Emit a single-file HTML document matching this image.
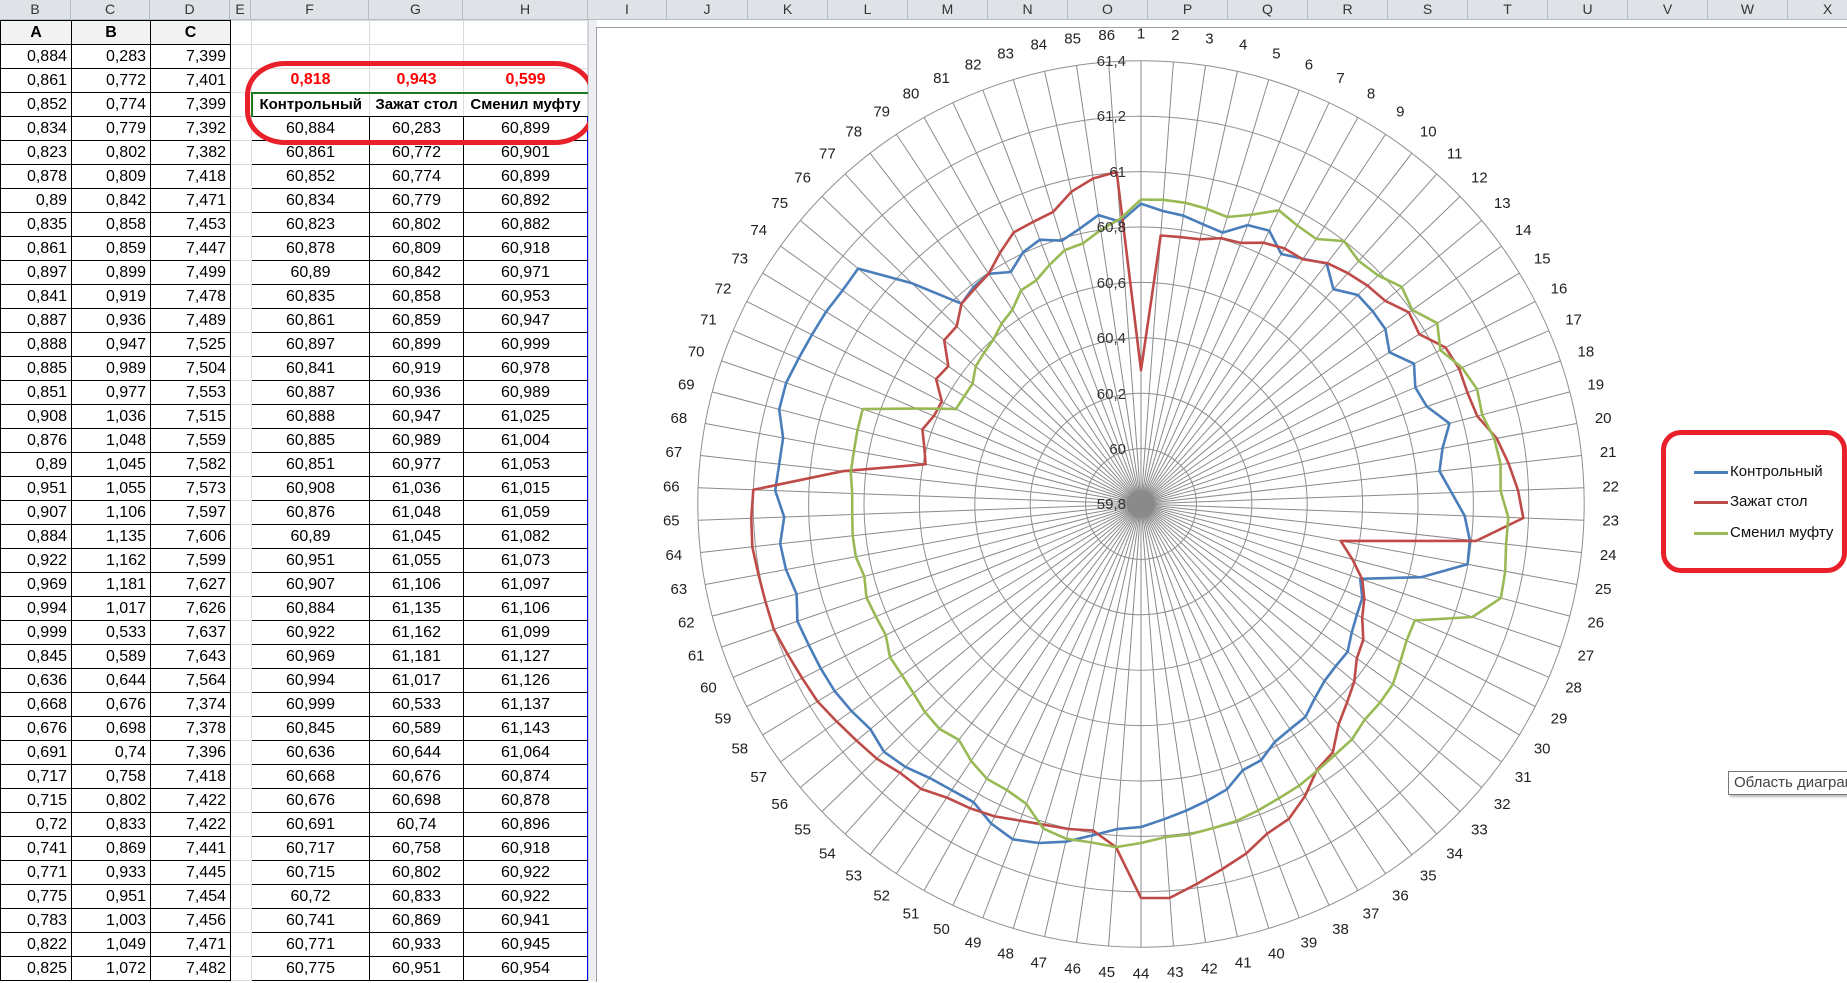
<!DOCTYPE html>
<html><head><meta charset="utf-8">
<style>
html,body{margin:0;padding:0;width:1847px;height:981px;overflow:hidden;background:#fff;font-family:"Liberation Sans","Noto Sans CJK SC",sans-serif;}
#hdr{position:absolute;left:0;top:0;width:1847px;height:19px;background:#dfe3e8;border-bottom:1px solid #b6bcc6;}
.ch{position:absolute;top:0;height:19px;line-height:19px;text-align:center;font-size:14px;color:#333;border-right:1px solid #b6bcc6;box-sizing:border-box;}
table{position:absolute;left:0;top:20px;border-collapse:collapse;table-layout:fixed;font-size:16px;}
td{height:24px;padding:0 4px;box-sizing:border-box;white-space:nowrap;overflow:hidden;border:1px solid #dadcdd;}
td.b{border:1px solid #000;text-align:right;}
td.f{border:1px solid #000;text-align:center;}
tr.h td.b{font-weight:bold;text-align:center;background:#f2f2f2;}
td.r{color:#f00;font-weight:bold;text-align:center;}
td.t{font-weight:bold;text-align:center;font-size:15px;padding:0 1px;border-top:2px solid #1e7a1e;border-bottom:1px solid #000;}
#split{position:absolute;left:588px;top:20px;width:8px;height:961px;background:#eceef1;border-left:1px solid #c9ccd1;}
#chart{position:absolute;left:596px;top:27px;width:1251px;height:954px;background:#fff;border-left:1px solid #a0a0a0;border-top:1px solid #a0a0a0;overflow:visible;}
.lb{position:absolute;left:1141px;top:504px;font-size:15px;color:#222;white-space:nowrap;transform:translate(-50%,-50%) rotate(calc(var(--i)*4.18605deg)) translateY(-470px) rotate(calc(var(--i)*-4.18605deg));}
#redov{position:absolute;left:245px;top:61px;width:340px;height:74px;border:5px solid #e8202a;border-radius:40px/34px;}
#leg{position:absolute;left:1661px;top:430px;width:176px;height:133px;border:5px solid #e8202a;border-radius:20px;}
.li{position:absolute;left:1694px;font-size:15px;color:#111;white-space:nowrap;}
.li span{display:inline-block;width:34px;height:3px;vertical-align:middle;margin-right:2px;}
#tip{position:absolute;left:1728px;top:771px;width:140px;height:22px;border:1px solid #777;background:#fff;font-size:15px;color:#444;line-height:22px;padding-left:5px;box-shadow:2px 2px 2px #bbb;white-space:nowrap;overflow:hidden;}
</style></head><body>
<div id="hdr">
<div class="ch" style="left:0;width:71px">B</div>
<div class="ch" style="left:71px;width:79px">C</div>
<div class="ch" style="left:150px;width:80px">D</div>
<div class="ch" style="left:230px;width:21px">E</div>
<div class="ch" style="left:251px;width:118px">F</div>
<div class="ch" style="left:369px;width:94px">G</div>
<div class="ch" style="left:463px;width:125px">H</div>
<div class="ch" style="left:588px;width:79px">I</div>
<div class="ch" style="left:667px;width:81px">J</div>
<div class="ch" style="left:748px;width:80px">K</div>
<div class="ch" style="left:828px;width:80px">L</div>
<div class="ch" style="left:908px;width:80px">M</div>
<div class="ch" style="left:988px;width:80px">N</div>
<div class="ch" style="left:1068px;width:80px">O</div>
<div class="ch" style="left:1148px;width:80px">P</div>
<div class="ch" style="left:1228px;width:80px">Q</div>
<div class="ch" style="left:1308px;width:80px">R</div>
<div class="ch" style="left:1388px;width:80px">S</div>
<div class="ch" style="left:1468px;width:80px">T</div>
<div class="ch" style="left:1548px;width:80px">U</div>
<div class="ch" style="left:1628px;width:80px">V</div>
<div class="ch" style="left:1708px;width:80px">W</div>
<div class="ch" style="left:1788px;width:80px">X</div>
</div>

<table>
<colgroup><col style="width:71px"><col style="width:79px"><col style="width:80px"><col style="width:21px"><col style="width:118px"><col style="width:94px"><col style="width:124px"></colgroup>
<tr class="h"><td class="b">A</td><td class="b">B</td><td class="b">C</td><td></td><td></td><td></td><td></td></tr>
<tr><td class="b">0,884</td><td class="b">0,283</td><td class="b">7,399</td><td></td><td></td><td></td><td></td></tr>
<tr><td class="b">0,861</td><td class="b">0,772</td><td class="b">7,401</td><td></td><td class="r">0,818</td><td class="r">0,943</td><td class="r">0,599</td></tr>
<tr><td class="b">0,852</td><td class="b">0,774</td><td class="b">7,399</td><td></td><td class="t" style="border-left:2px solid #1e7a1e">Контрольный</td><td class="t">Зажат стол</td><td class="t">Сменил муфту</td></tr>
<tr><td class="b">0,834</td><td class="b">0,779</td><td class="b">7,392</td><td></td><td class="f" style="border-left:1px solid #00f">60,884</td><td class="f">60,283</td><td class="f" style="border-right:1px solid #00f">60,899</td></tr>
<tr><td class="b">0,823</td><td class="b">0,802</td><td class="b">7,382</td><td></td><td class="f" style="border-left:1px solid #00f">60,861</td><td class="f">60,772</td><td class="f" style="border-right:1px solid #00f">60,901</td></tr>
<tr><td class="b">0,878</td><td class="b">0,809</td><td class="b">7,418</td><td></td><td class="f" style="border-left:1px solid #00f">60,852</td><td class="f">60,774</td><td class="f" style="border-right:1px solid #00f">60,899</td></tr>
<tr><td class="b">0,89</td><td class="b">0,842</td><td class="b">7,471</td><td></td><td class="f" style="border-left:1px solid #00f">60,834</td><td class="f">60,779</td><td class="f" style="border-right:1px solid #00f">60,892</td></tr>
<tr><td class="b">0,835</td><td class="b">0,858</td><td class="b">7,453</td><td></td><td class="f" style="border-left:1px solid #00f">60,823</td><td class="f">60,802</td><td class="f" style="border-right:1px solid #00f">60,882</td></tr>
<tr><td class="b">0,861</td><td class="b">0,859</td><td class="b">7,447</td><td></td><td class="f" style="border-left:1px solid #00f">60,878</td><td class="f">60,809</td><td class="f" style="border-right:1px solid #00f">60,918</td></tr>
<tr><td class="b">0,897</td><td class="b">0,899</td><td class="b">7,499</td><td></td><td class="f" style="border-left:1px solid #00f">60,89</td><td class="f">60,842</td><td class="f" style="border-right:1px solid #00f">60,971</td></tr>
<tr><td class="b">0,841</td><td class="b">0,919</td><td class="b">7,478</td><td></td><td class="f" style="border-left:1px solid #00f">60,835</td><td class="f">60,858</td><td class="f" style="border-right:1px solid #00f">60,953</td></tr>
<tr><td class="b">0,887</td><td class="b">0,936</td><td class="b">7,489</td><td></td><td class="f" style="border-left:1px solid #00f">60,861</td><td class="f">60,859</td><td class="f" style="border-right:1px solid #00f">60,947</td></tr>
<tr><td class="b">0,888</td><td class="b">0,947</td><td class="b">7,525</td><td></td><td class="f" style="border-left:1px solid #00f">60,897</td><td class="f">60,899</td><td class="f" style="border-right:1px solid #00f">60,999</td></tr>
<tr><td class="b">0,885</td><td class="b">0,989</td><td class="b">7,504</td><td></td><td class="f" style="border-left:1px solid #00f">60,841</td><td class="f">60,919</td><td class="f" style="border-right:1px solid #00f">60,978</td></tr>
<tr><td class="b">0,851</td><td class="b">0,977</td><td class="b">7,553</td><td></td><td class="f" style="border-left:1px solid #00f">60,887</td><td class="f">60,936</td><td class="f" style="border-right:1px solid #00f">60,989</td></tr>
<tr><td class="b">0,908</td><td class="b">1,036</td><td class="b">7,515</td><td></td><td class="f" style="border-left:1px solid #00f">60,888</td><td class="f">60,947</td><td class="f" style="border-right:1px solid #00f">61,025</td></tr>
<tr><td class="b">0,876</td><td class="b">1,048</td><td class="b">7,559</td><td></td><td class="f" style="border-left:1px solid #00f">60,885</td><td class="f">60,989</td><td class="f" style="border-right:1px solid #00f">61,004</td></tr>
<tr><td class="b">0,89</td><td class="b">1,045</td><td class="b">7,582</td><td></td><td class="f" style="border-left:1px solid #00f">60,851</td><td class="f">60,977</td><td class="f" style="border-right:1px solid #00f">61,053</td></tr>
<tr><td class="b">0,951</td><td class="b">1,055</td><td class="b">7,573</td><td></td><td class="f" style="border-left:1px solid #00f">60,908</td><td class="f">61,036</td><td class="f" style="border-right:1px solid #00f">61,015</td></tr>
<tr><td class="b">0,907</td><td class="b">1,106</td><td class="b">7,597</td><td></td><td class="f" style="border-left:1px solid #00f">60,876</td><td class="f">61,048</td><td class="f" style="border-right:1px solid #00f">61,059</td></tr>
<tr><td class="b">0,884</td><td class="b">1,135</td><td class="b">7,606</td><td></td><td class="f" style="border-left:1px solid #00f">60,89</td><td class="f">61,045</td><td class="f" style="border-right:1px solid #00f">61,082</td></tr>
<tr><td class="b">0,922</td><td class="b">1,162</td><td class="b">7,599</td><td></td><td class="f" style="border-left:1px solid #00f">60,951</td><td class="f">61,055</td><td class="f" style="border-right:1px solid #00f">61,073</td></tr>
<tr><td class="b">0,969</td><td class="b">1,181</td><td class="b">7,627</td><td></td><td class="f" style="border-left:1px solid #00f">60,907</td><td class="f">61,106</td><td class="f" style="border-right:1px solid #00f">61,097</td></tr>
<tr><td class="b">0,994</td><td class="b">1,017</td><td class="b">7,626</td><td></td><td class="f" style="border-left:1px solid #00f">60,884</td><td class="f">61,135</td><td class="f" style="border-right:1px solid #00f">61,106</td></tr>
<tr><td class="b">0,999</td><td class="b">0,533</td><td class="b">7,637</td><td></td><td class="f" style="border-left:1px solid #00f">60,922</td><td class="f">61,162</td><td class="f" style="border-right:1px solid #00f">61,099</td></tr>
<tr><td class="b">0,845</td><td class="b">0,589</td><td class="b">7,643</td><td></td><td class="f" style="border-left:1px solid #00f">60,969</td><td class="f">61,181</td><td class="f" style="border-right:1px solid #00f">61,127</td></tr>
<tr><td class="b">0,636</td><td class="b">0,644</td><td class="b">7,564</td><td></td><td class="f" style="border-left:1px solid #00f">60,994</td><td class="f">61,017</td><td class="f" style="border-right:1px solid #00f">61,126</td></tr>
<tr><td class="b">0,668</td><td class="b">0,676</td><td class="b">7,374</td><td></td><td class="f" style="border-left:1px solid #00f">60,999</td><td class="f">60,533</td><td class="f" style="border-right:1px solid #00f">61,137</td></tr>
<tr><td class="b">0,676</td><td class="b">0,698</td><td class="b">7,378</td><td></td><td class="f" style="border-left:1px solid #00f">60,845</td><td class="f">60,589</td><td class="f" style="border-right:1px solid #00f">61,143</td></tr>
<tr><td class="b">0,691</td><td class="b">0,74</td><td class="b">7,396</td><td></td><td class="f" style="border-left:1px solid #00f">60,636</td><td class="f">60,644</td><td class="f" style="border-right:1px solid #00f">61,064</td></tr>
<tr><td class="b">0,717</td><td class="b">0,758</td><td class="b">7,418</td><td></td><td class="f" style="border-left:1px solid #00f">60,668</td><td class="f">60,676</td><td class="f" style="border-right:1px solid #00f">60,874</td></tr>
<tr><td class="b">0,715</td><td class="b">0,802</td><td class="b">7,422</td><td></td><td class="f" style="border-left:1px solid #00f">60,676</td><td class="f">60,698</td><td class="f" style="border-right:1px solid #00f">60,878</td></tr>
<tr><td class="b">0,72</td><td class="b">0,833</td><td class="b">7,422</td><td></td><td class="f" style="border-left:1px solid #00f">60,691</td><td class="f">60,74</td><td class="f" style="border-right:1px solid #00f">60,896</td></tr>
<tr><td class="b">0,741</td><td class="b">0,869</td><td class="b">7,441</td><td></td><td class="f" style="border-left:1px solid #00f">60,717</td><td class="f">60,758</td><td class="f" style="border-right:1px solid #00f">60,918</td></tr>
<tr><td class="b">0,771</td><td class="b">0,933</td><td class="b">7,445</td><td></td><td class="f" style="border-left:1px solid #00f">60,715</td><td class="f">60,802</td><td class="f" style="border-right:1px solid #00f">60,922</td></tr>
<tr><td class="b">0,775</td><td class="b">0,951</td><td class="b">7,454</td><td></td><td class="f" style="border-left:1px solid #00f">60,72</td><td class="f">60,833</td><td class="f" style="border-right:1px solid #00f">60,922</td></tr>
<tr><td class="b">0,783</td><td class="b">1,003</td><td class="b">7,456</td><td></td><td class="f" style="border-left:1px solid #00f">60,741</td><td class="f">60,869</td><td class="f" style="border-right:1px solid #00f">60,941</td></tr>
<tr><td class="b">0,822</td><td class="b">1,049</td><td class="b">7,471</td><td></td><td class="f" style="border-left:1px solid #00f">60,771</td><td class="f">60,933</td><td class="f" style="border-right:1px solid #00f">60,945</td></tr>
<tr><td class="b">0,825</td><td class="b">1,072</td><td class="b">7,482</td><td></td><td class="f" style="border-left:1px solid #00f">60,775</td><td class="f">60,951</td><td class="f" style="border-right:1px solid #00f">60,954</td></tr>
</table>
<div id="redov"></div>
<div id="split"></div>
<div id="chart"></div>
<svg id="svg" width="1847" height="981" style="position:absolute;left:0;top:0" xmlns="http://www.w3.org/2000/svg">
<g id="spokes" stroke="#8a8a8a" stroke-width="1"></g>
<g fill="none" stroke="#8f8f8f" stroke-width="1">
<circle cx="1141" cy="504" r="55.4"/><circle cx="1141" cy="504" r="110.8"/><circle cx="1141" cy="504" r="166.2"/><circle cx="1141" cy="504" r="221.6"/><circle cx="1141" cy="504" r="277"/><circle cx="1141" cy="504" r="332.4"/><circle cx="1141" cy="504" r="387.8"/><circle cx="1141" cy="504" r="443.2"/>
</g>
<circle cx="1141" cy="504" r="14" fill="#8a8a8a"/>
<polygon id="pb" fill="none" stroke="#4a7ebb" stroke-width="2.6" stroke-linejoin="round"/>
<polygon id="pr" fill="none" stroke="#be4b48" stroke-width="2.6" stroke-linejoin="round"/>
<polygon id="pg" fill="none" stroke="#98b954" stroke-width="2.6" stroke-linejoin="round"/>
<g font-family="Liberation Sans, sans-serif" font-size="15" fill="#333" text-anchor="end">
<text x="1126" y="509">59,8</text><text x="1126" y="454">60</text><text x="1126" y="399">60,2</text><text x="1126" y="343">60,4</text><text x="1126" y="288">60,6</text><text x="1126" y="232">60,8</text><text x="1126" y="177">61</text><text x="1126" y="121">61,2</text><text x="1126" y="66">61,4</text>
</g>
</svg>
<div class="lb" style="--i:0">1</div><div class="lb" style="--i:1">2</div><div class="lb" style="--i:2">3</div><div class="lb" style="--i:3">4</div><div class="lb" style="--i:4">5</div><div class="lb" style="--i:5">6</div><div class="lb" style="--i:6">7</div><div class="lb" style="--i:7">8</div><div class="lb" style="--i:8">9</div><div class="lb" style="--i:9">10</div>
<div class="lb" style="--i:10">11</div><div class="lb" style="--i:11">12</div><div class="lb" style="--i:12">13</div><div class="lb" style="--i:13">14</div><div class="lb" style="--i:14">15</div><div class="lb" style="--i:15">16</div><div class="lb" style="--i:16">17</div><div class="lb" style="--i:17">18</div><div class="lb" style="--i:18">19</div><div class="lb" style="--i:19">20</div>
<div class="lb" style="--i:20">21</div><div class="lb" style="--i:21">22</div><div class="lb" style="--i:22">23</div><div class="lb" style="--i:23">24</div><div class="lb" style="--i:24">25</div><div class="lb" style="--i:25">26</div><div class="lb" style="--i:26">27</div><div class="lb" style="--i:27">28</div><div class="lb" style="--i:28">29</div><div class="lb" style="--i:29">30</div>
<div class="lb" style="--i:30">31</div><div class="lb" style="--i:31">32</div><div class="lb" style="--i:32">33</div><div class="lb" style="--i:33">34</div><div class="lb" style="--i:34">35</div><div class="lb" style="--i:35">36</div><div class="lb" style="--i:36">37</div><div class="lb" style="--i:37">38</div><div class="lb" style="--i:38">39</div><div class="lb" style="--i:39">40</div>
<div class="lb" style="--i:40">41</div><div class="lb" style="--i:41">42</div><div class="lb" style="--i:42">43</div><div class="lb" style="--i:43">44</div><div class="lb" style="--i:44">45</div><div class="lb" style="--i:45">46</div><div class="lb" style="--i:46">47</div><div class="lb" style="--i:47">48</div><div class="lb" style="--i:48">49</div><div class="lb" style="--i:49">50</div>
<div class="lb" style="--i:50">51</div><div class="lb" style="--i:51">52</div><div class="lb" style="--i:52">53</div><div class="lb" style="--i:53">54</div><div class="lb" style="--i:54">55</div><div class="lb" style="--i:55">56</div><div class="lb" style="--i:56">57</div><div class="lb" style="--i:57">58</div><div class="lb" style="--i:58">59</div><div class="lb" style="--i:59">60</div>
<div class="lb" style="--i:60">61</div><div class="lb" style="--i:61">62</div><div class="lb" style="--i:62">63</div><div class="lb" style="--i:63">64</div><div class="lb" style="--i:64">65</div><div class="lb" style="--i:65">66</div><div class="lb" style="--i:66">67</div><div class="lb" style="--i:67">68</div><div class="lb" style="--i:68">69</div><div class="lb" style="--i:69">70</div>
<div class="lb" style="--i:70">71</div><div class="lb" style="--i:71">72</div><div class="lb" style="--i:72">73</div><div class="lb" style="--i:73">74</div><div class="lb" style="--i:74">75</div><div class="lb" style="--i:75">76</div><div class="lb" style="--i:76">77</div><div class="lb" style="--i:77">78</div><div class="lb" style="--i:78">79</div><div class="lb" style="--i:79">80</div>
<div class="lb" style="--i:80">81</div><div class="lb" style="--i:81">82</div><div class="lb" style="--i:82">83</div><div class="lb" style="--i:83">84</div><div class="lb" style="--i:84">85</div><div class="lb" style="--i:85">86</div>

<div id="leg"></div>
<div class="li" style="top:463px"><span style="background:#4a7ebb"></span>Контрольный</div>
<div class="li" style="top:493px"><span style="background:#be4b48"></span>Зажат стол</div>
<div class="li" style="top:524px"><span style="background:#98b954"></span>Сменил муфту</div>
<div id="tip">Область диаграммы</div>

<script>
(function(){
var cx=1141,cy=504,N=86,ns="http://www.w3.org/2000/svg";
var sp=document.getElementById("spokes");
for(var i=0;i<N;i++){var a=i*2*Math.PI/N;var l=document.createElementNS(ns,"line");
l.setAttribute("x1",cx);l.setAttribute("y1",cy);l.setAttribute("x2",(cx+443.2*Math.sin(a)).toFixed(1));l.setAttribute("y2",(cy-443.2*Math.cos(a)).toFixed(1));sp.appendChild(l);}
var F=[60.884,60.861,60.852,60.834,60.823,60.878,60.89,60.835,60.861,60.897,60.841,60.887,60.888,60.885,60.851,60.908,60.876,60.89,60.951,60.907,60.884,60.922,60.969,60.994,60.999,60.845,60.636,60.668,60.676,60.691,60.717,60.715,60.72,60.741,60.771,60.775];
var G=[60.283,60.772,60.774,60.779,60.802,60.809,60.842,60.858,60.859,60.899,60.919,60.936,60.947,60.989,60.977,61.036,61.048,61.045,61.055,61.106,61.135,61.162,61.181,61.017,60.533,60.589,60.644,60.676,60.698,60.74,60.758,60.802,60.833,60.869,60.933,60.951];
var H=[60.899,60.901,60.899,60.892,60.882,60.918,60.971,60.953,60.947,60.999,60.978,60.989,61.025,61.004,61.053,61.015,61.059,61.082,61.073,61.097,61.106,61.099,61.127,61.126,61.137,61.143,61.064,60.874,60.878,60.896,60.918,60.922,60.922,60.941,60.945,60.954];
var Fb=[273,283,285,298,304,310,316,323,326,335,346,354,359,353,342,343,346,353,357,352,356,359,360,361,363,356,361,363,357,366,364,364,374,375,372,370,369,367,368,318,269,274,276,266,278,283,275,282,292,283];
var Gb=[335,348,353,365,374,384,395,394,344,330,333,335,339,345,349,352,360,361,367,370,374,379,381,384,388,388,389,391,390,388,300,219,224,231,225,224,240,237,256,256,269,272,276,288,300,302,305,320,329,333];
var Hb=[323,325,328,331,332,334,334,339,344,342,343,339,321,316,315,308,298,302,300,296,294,294,287,288,290,286,290,290,289,289,292,292,293,294,244,208,207,207,215,218,221,228,233,245,247,256,265,267,277,286];
function R(v,b){return v.map(function(x){return (x-59.8)*277;}).concat(b);}
function pts(arr){return arr.map(function(r,i){var a=i*2*Math.PI/N;return (cx+r*Math.sin(a)).toFixed(1)+","+(cy-r*Math.cos(a)).toFixed(1);}).join(" ");}
document.getElementById("pb").setAttribute("points",pts(R(F,Fb)));
document.getElementById("pr").setAttribute("points",pts(R(G,Gb)));
document.getElementById("pg").setAttribute("points",pts(R(H,Hb)));
})();
</script>
</body></html>
